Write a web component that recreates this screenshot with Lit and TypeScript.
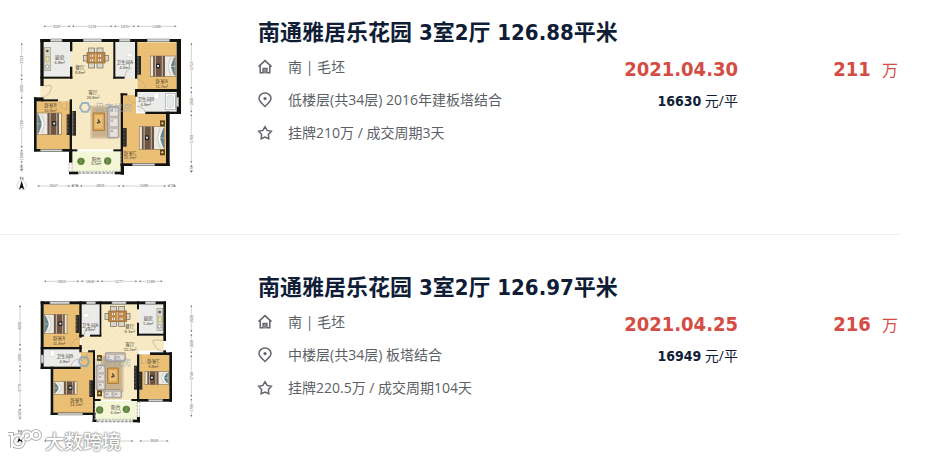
import { LitElement, html, svg, css } from "lit";
import { customElement, property } from "lit/decorators.js";

type Box = [number, number, number, number];
type Label = [number, number, string, string];
type Dim = [number, number, string];

interface Plan {
  living: Box[];
  wood: Box[];
  tile: Box[];
  balcony: Box;
  walls: Box[];
  windows: Box[];
  doors: string[];
  labels: Label[];
  top: Dim[];
  bottom: Dim[];
  left: Dim[];
  right: Dim[];
  rails: [number, number, number, number];
  furniture: unknown;
  compass: [number, number];
  mark: [number, number];
}

interface Deal {
  title: string;
  facing: string;
  floor: string;
  cycle: string;
  date: string;
  unit: string;
  total: string;
  plan: Plan;
}

const rect = (b: Box, fill: string) =>
  svg`<rect x=${b[0]} y=${b[1]} width=${b[2] - b[0]} height=${b[3] - b[1]} fill=${fill}></rect>`;

/* A double bed whose pillows are on the left; flip puts them on the right. */
const bed = (x: number, y: number, w: number, h: number, flip = false) => svg`
  <g transform=${flip ? `translate(${x + w} ${y}) scale(-1 1)` : `translate(${x} ${y})`}>
    <rect width=${w} height=${h} fill="#eee9df" stroke="#8d7a5c" stroke-width="2"></rect>
    <path d=${`M3 5l9 ${h / 2 - 7}H3zM3 ${h - 5}l9 ${7 - h / 2}H3z`} fill="#5f8493" stroke="#49707c" stroke-width="2"></path>
    <path d=${`M14 5l7 ${h / 2 - 5}l-7 ${h / 2 - 5}`} fill="#fff" stroke="#a9b4b4" stroke-width="2"></path>
    <rect x=${w * 0.42} width=${w * 0.48} height=${h} fill="#6d5444"></rect>
    <path d=${`M${w * 0.53} 0V${h}M${w * 0.81} 0V${h}`} stroke="#cbbba2" stroke-width="3"></path>
    <rect x=${w * 0.62} y=${h / 2 - 8} width="12" height="14" fill="#222"></rect>
    <rect x=${w * 0.62 + 3} y=${h / 2 - 4} width="6" height="6" fill="#d8dde0"></rect>
  </g>`;

const cabinet = (x: number, y: number, h: number) => svg`
  <rect x=${x} y=${y} width="11" height=${h} fill="#2c2c2a"></rect>
  <path d=${`M${x + 3} ${y + 4}V${y + h - 4}`} stroke="#77746a" stroke-width="2" stroke-dasharray="7 4"></path>`;

const dining = (x: number, y: number) => svg`
  <g transform=${`translate(${x} ${y})`}>
    <g fill="#d9d5cc" stroke="#706455" stroke-width="2">
      <rect x="17" y="0" width="18" height="16"></rect><rect x="42" y="0" width="18" height="16"></rect>
      <rect x="17" y="44" width="18" height="16"></rect><rect x="42" y="44" width="18" height="16"></rect>
      <rect x="1" y="22" width="14" height="17"></rect><rect x="62" y="22" width="14" height="17"></rect>
    </g>
    <rect x="12" y="14" width="54" height="31" fill="#bd8848" stroke="#8b5f2c" stroke-width="2"></rect>
    <path d="M22 23h9M45 23h9M22 37h9M45 37h9" stroke="#fff" stroke-width="6"></path>
    <path d="M26 20v6M49 20v6M26 34v6M49 34v6" stroke="#594027" stroke-width="2"></path>
    <path d="M38 17v25" stroke="#e4b374" stroke-width="4"></path>
  </g>`;

const plant = (x: number, y: number) => svg`
  <circle cx=${x} cy=${y} r="11" fill="#5b7f3d"></circle>
  <path d=${`M${x - 8} ${y - 5}l16 10M${x + 6} ${y - 8}l-12 16M${x} ${y - 10}v20`} stroke="#7da154" stroke-width="2"></path>`;

const stand = (x: number, y: number) => svg`
  <rect x=${x} y=${y} width="15" height="18" fill="#6a4b1d"></rect>
  <circle cx=${x + 7} cy=${y + 9} r="5" fill="#e7c977" stroke="#231a0c" stroke-width="2"></circle>`;

const cook = (x: number, y: number, h: number) => svg`
  <rect x=${x} y=${y} width="17" height=${h} fill="#dad7c6" stroke="#9b978a" stroke-width="2"></rect>
  <circle cx=${x + 8} cy=${y + 11} r="4" fill="#595649"></circle>
  <rect x=${x + 4} y=${y + h / 2 - 7} width="9" height="15" fill="#ebe397" stroke="#858068"></rect>
  <circle cx=${x + 8} cy=${y + h - 12} r="5" fill="#fff" stroke="#77746a" stroke-width="2"></circle>`;

const rug = (x: number, y: number, w: number, h: number) => svg`
  <rect x=${x} y=${y} width=${w} height=${h} fill="#d9c3a0"></rect>
  <rect x=${x + 6} y=${y + 6} width=${w - 12} height=${h - 12} fill="#c9b18c"></rect>`;

const coffeeTable = (x: number, y: number, w: number, h: number) => svg`
  <rect x=${x} y=${y} width=${w} height=${h} fill="#d9a451" stroke="#936a2f" stroke-width="2"></rect>
  <rect x=${x + 5} y=${y + 6} width=${w - 10} height=${h - 12} fill="#eabf77"></rect>
  <path d=${`M${x + w / 2 - 5} ${y + h / 2 + 4}l10-3M${x + w / 2 - 2} ${y + h / 2 - 7}l5 9`} stroke="#554a39" stroke-width="4"></path>`;

const sofa = (x: number, y: number, w: number, h: number, parts: number) => {
  const tall = h > w;
  const step = (tall ? h : w) / parts;
  return svg`
    <rect x=${x} y=${y} width=${w} height=${h} rx="3" fill="#c6bdb6" stroke="#8d827b" stroke-width="2"></rect>
    ${Array.from({ length: parts }, (_, i) => {
      const px = tall ? x + 6 : x + i * step + 3;
      const py = tall ? y + i * step + 3 : y + 6;
      return svg`<rect x=${px} y=${py} width=${tall ? w - 9 : step - 6} height=${tall ? step - 6 : h - 9} rx="2" fill="#e8e2dc" stroke="#968c85"></rect>
        <path d=${`M${px + 3} ${py + 4}l7 7m0-7l-7 7`} stroke="#9fa2b0" stroke-width="3"></path>`;
    })}`;
};

const planA: Plan = {
  living: [[131, 97, 364, 418], [362, 200, 410, 255], [121, 228, 135, 262]],
  wood: [[412, 97, 530, 240], [368, 255, 408, 462], [368, 310, 500, 462], [110, 274, 210, 418]],
  tile: [[131, 97, 212, 200], [345, 97, 405, 205], [412, 247, 530, 305]],
  balcony: [216, 424, 362, 484],
  walls: [
    [121, 87, 543, 96], [121, 87, 131, 228], [121, 200, 217, 206], [210, 87, 217, 124], [210, 170, 217, 206],
    [102, 262, 131, 274], [102, 262, 110, 424], [124, 268, 174, 274], [102, 417, 217, 425],
    [209, 268, 216, 430], [340, 87, 346, 206], [340, 200, 374, 206], [405, 87, 412, 206],
    [405, 237, 543, 246], [405, 240, 412, 260], [530, 87, 543, 312], [436, 305, 537, 312],
    [362, 250, 369, 467], [362, 250, 382, 256], [498, 305, 509, 468], [362, 460, 509, 468],
    [216, 418, 232, 424], [340, 418, 364, 424], [207, 424, 217, 458], [362, 460, 372, 494], [207, 485, 235, 493], [344, 485, 372, 493],
  ],
  windows: [[152, 87, 186, 95], [250, 87, 304, 95], [358, 87, 390, 95], [442, 87, 508, 95], [122, 418, 186, 424], [398, 461, 464, 467], [528, 262, 536, 290]],
  doors: ["M131 228q24-4 24 0q-2 24-24 34", "M178 272q2 24 22 28v-28", "M374 202q2-24 22-28", "M412 208q22 4 26 30", "M382 254q4 22 24 27", "M436 306q-4-14-26-18"],
  labels: [
    [179, 145, "厨房", "6.8m²"], [240, 175, "餐厅", "8.8m²"], [279, 249, "客厅", "26.8m²"], [374, 160, "卫生间A", "4.6m²"],
    [485, 216, "卧室A", "11.7m²"], [437, 270, "卫生间B", "4.8m²"], [151, 289, "卧室B", "10.8m²"], [390, 431, "卧室C", "15.1m²"], [289, 449, "阳台", "6.5m²"],
  ],
  top: [[128, 214, "3187"], [214, 340, "5218"], [340, 408, "1870"], [408, 532, "5088"]],
  bottom: [[110, 212, "3607"], [212, 238, "978"], [238, 364, "4809"], [364, 500, "5088"], [500, 530, "728"]],
  left: [[96, 202, "3753"], [202, 270, "1800"], [270, 416, "5768"], [416, 462, "1808"], [462, 484, "947"]],
  right: [[96, 240, "5753"], [240, 310, "1800"], [310, 462, "5768"], [462, 490, "978"]],
  rails: [235, 489, 344, 489],
  compass: [65, 526],
  mark: [255, 293],
  furniture: svg`
    ${cook(134, 112, 70)} ${dining(249, 114)} ${cabinet(412, 138, 56)} ${bed(452, 138, 74, 62, true)}
    ${bed(112, 309, 72, 65)} ${cabinet(200, 313, 62)} ${cabinet(217, 303, 74)} ${cabinet(369, 354, 56)}
    ${rug(271, 287, 70, 99)} ${coffeeTable(279, 309, 34, 52)} ${sofa(323, 290, 34, 94, 3)}
    ${bed(418, 350, 76, 68, true)} ${stand(480, 331)} ${stand(480, 418)}
    <rect x="496" y="251" width="30" height="48" fill="#fff" stroke="#9ea1a2" stroke-width="2"></rect>
    <rect x="501" y="256" width="20" height="38" rx="7" fill="#e5e8e9" stroke="#b4b8b9"></rect>
    <path d="M381 130h15v10h-15zM462 249h14v17h-14z" fill="#fff" stroke="#bbb"></path>
    ${plant(243, 454)} ${plant(323, 453)}`,
};

/* The last two spans below this plan carry no figure: the stamp lies over them. */
const planB: Plan = {
  living: [[304, 118, 416, 405], [242, 212, 492, 257], [282, 250, 416, 405]],
  wood: [[131, 118, 240, 248], [160, 310, 280, 444], [242, 260, 280, 320], [418, 268, 508, 403]],
  tile: [[245, 118, 299, 212], [131, 253, 240, 306], [417, 118, 490, 207]],
  balcony: [284, 408, 414, 466],
  walls: [
    [122, 109, 497, 118], [122, 109, 131, 312], [238, 109, 245, 218], [299, 109, 304, 214], [238, 209, 252, 215], [270, 209, 304, 215],
    [122, 246, 245, 253], [238, 240, 245, 262], [122, 305, 242, 312], [152, 305, 160, 450], [152, 443, 286, 450],
    [279, 256, 285, 450], [264, 256, 285, 262], [411, 109, 417, 133], [411, 173, 417, 211], [411, 206, 497, 212],
    [490, 109, 498, 228], [490, 256, 498, 270], [450, 262, 516, 270], [508, 262, 516, 410], [411, 268, 418, 410],
    [411, 402, 516, 410], [279, 402, 302, 408], [394, 402, 416, 408], [278, 443, 286, 471], [411, 456, 420, 472], [278, 464, 290, 471], [398, 464, 420, 472],
  ],
  windows: [[150, 109, 208, 117], [260, 109, 286, 117], [336, 109, 378, 117], [436, 109, 466, 117], [174, 444, 248, 450], [446, 403, 488, 409], [123, 270, 131, 294]],
  doors: ["M490 227q-28-4-32 0q4 24 32 34", "M240 218q-24 4-26 28", "M252 212q2-20 18-26", "M213 305q2-20 27-24", "M242 288q16-2 24-28", "M424 268v28q22-2 24-26"],
  labels: [
    [177, 223, "卧室A", "11.8m²"], [270, 182, "卫生间A", "4.8m²"], [194, 276, "卫生间B", "4.8m²"], [389, 187, "餐厅", "8.1m²"],
    [445, 162, "厨房", "5.4m²"], [390, 241, "客厅", "25.2m²"], [460, 291, "卧室C", "9.8m²"], [229, 407, "卧室B", "14.5m²"], [347, 429, "阳台", "6.0m²"],
  ],
  top: [[130, 240, "3853"], [240, 300, "1808"], [300, 414, "5277"], [414, 490, "2188"]],
  bottom: [[130, 285, ""], [285, 402, ""], [416, 508, "3608"]],
  left: [[118, 246, "4600"], [246, 310, "1800"], [310, 428, "3778"], [428, 466, "1347"]],
  right: [[118, 204, "2608"], [204, 268, "1608"], [268, 398, "3748"], [398, 458, "1788"]],
  rails: [290, 469, 398, 469],
  compass: [60, 520],
  mark: [252, 291],
  furniture: svg`
    ${bed(133, 148, 68, 58)} ${cabinet(227, 150, 54)} ${dining(314, 124)} ${cook(471, 130, 66)}
    ${bed(163, 350, 68, 38)} ${cabinet(268, 346, 50)} ${cabinet(402, 302, 72)} ${cabinet(416, 320, 54)}
    ${bed(435, 319, 70, 40, true)} ${rug(302, 272, 69, 110)} ${coffeeTable(323, 309, 32, 46)}
    ${sofa(288, 300, 28, 75, 3)} ${sofa(316, 263, 60, 26, 2)} ${sofa(312, 374, 53, 25, 2)} ${stand(291, 270)} ${stand(291, 376)}
    <path d="M249 145h18v12h-18zM151 256h13v18h-13z" fill="#fff" stroke="#bbb"></path>
    ${plant(299, 435)} ${plant(379, 433)}`,
};

const deals: Deal[] = [
  { title: "南通雅居乐花园 3室2厅 126.88平米", facing: "南 | 毛坯", floor: "低楼层(共34层) 2016年建板塔结合", cycle: "挂牌210万 / 成交周期3天", date: "2021.04.30", unit: "16630", total: "211", plan: planA },
  { title: "南通雅居乐花园 3室2厅 126.97平米", facing: "南 | 毛坯", floor: "中楼层(共34层) 板塔结合", cycle: "挂牌220.5万 / 成交周期104天", date: "2021.04.25", unit: "16949", total: "216", plan: planB },
];

@customElement("floor-plan")
class FloorPlan extends LitElement {
  @property({ attribute: false }) plan!: Plan;

  static styles = css`
    :host { display: block; }
    svg { display: block; width: 100%; height: auto; }
    .label { font: 14px "Noto Sans CJK SC", sans-serif; fill: #4a4334; text-anchor: middle; }
    .area { font: 12px "Liberation Sans", sans-serif; fill: #4a4334; text-anchor: middle; }
    .dim { font: 11px "Liberation Sans", sans-serif; fill: #666; text-anchor: middle; }
    .mark { font: 28px "Noto Sans CJK SC", sans-serif; fill: #93a7ba; opacity: 0.7; }
  `;

  private across(list: Dim[], y: number) {
    return list.map(([a, b, t]) => svg`
      <path d=${`M${a + 4} ${y}H${(a + b) / 2 - 13}M${(a + b) / 2 + 13} ${y}H${b - 4}`} stroke="#bbb" stroke-width="2"></path>
      <path d=${`M${a + 2} ${y}l6-3v6zM${b - 2} ${y}l-6-3v6z`} fill="#777"></path>
      ${t ? svg`<text class="dim" x=${(a + b) / 2} y=${y + 4}>${t}</text>` : ""}`);
  }

  private down(list: Dim[], x: number) {
    return list.map(([a, b, t]) => svg`
      <path d=${`M${x} ${a + 4}V${(a + b) / 2 - 13}M${x} ${(a + b) / 2 + 13}V${b - 4}`} stroke="#bbb" stroke-width="2"></path>
      <path d=${`M${x} ${a + 2}l-3 6h6zM${x} ${b - 2}l-3-6h6z`} fill="#777"></path>
      <text class="dim" transform=${`translate(${x + 4} ${(a + b) / 2}) rotate(-90)`}>${t}</text>`);
  }

  render() {
    const p = this.plan;
    const [cx, cy] = p.compass;
    const [mx, my] = p.mark;
    const first = p === planA;
    return html`<svg viewBox="0 0 630 582" role="img" aria-label="户型图">
      <defs>
        <pattern id="wood" width="20" height="12" patternUnits="userSpaceOnUse">
          <rect width="20" height="12" fill="#ecc176"></rect>
          <path d="M0 6H20M0 12H20" stroke="#e4b463" stroke-width="1"></path>
        </pattern>
        <pattern id="stone" width="18" height="18" patternUnits="userSpaceOnUse">
          <rect width="18" height="18" fill="#f7eac5"></rect>
          <path d="M0 9L9 0M9 18L18 9" stroke="#f4e3b8" stroke-width="2"></path>
        </pattern>
      </defs>
      ${p.living.map((b) => rect(b, "url(#stone)"))}
      ${p.wood.map((b) => rect(b, "url(#wood)"))}
      ${p.tile.map((b) => rect(b, "#ebebea"))}
      ${rect(p.balcony, "#f4f6d8")}
      ${p.furniture}
      ${p.walls.map((b) => rect(b, "#12120f"))}
      ${p.windows.map((b) => svg`${rect(b, "#d5d5d3")}<rect x=${b[0]} y=${b[1]} width=${b[2] - b[0]} height=${b[3] - b[1]} fill="none" stroke="#8d8d8a" stroke-width="2"></rect>`)}
      ${p.doors.map((d) => svg`<path d=${d} fill="none" stroke="#b3a98c" stroke-width="2"></path>`)}
      <path d=${`M${p.rails[0]} ${p.rails[1]}H${p.rails[2]}`} stroke="#999" stroke-width="5" stroke-dasharray="9 3"></path>
      <path d=${first ? "M207 460v26M216 460v26M216 484H362M364 424v38" : "M412 410v46M419 410v46M284 408v58M286 463H411"} stroke="#999" stroke-width="2" stroke-dasharray="7 3"></path>
      <path d=${`M${mx - 15} ${my - 1}l7-13h16l7 13-7 13h-16z`} fill="none" stroke="#7fa1c4" stroke-width="6" opacity="0.75"></path>
      <text class="mark" x=${mx + 30} y=${my + 11}>贝壳找房</text>
      ${p.labels.map(([x, y, n, a]) => svg`<text class="label" x=${x} y=${y + 3}>${n}</text><text class="area" x=${x} y=${y + 17}>${a}</text>`)}
      ${this.across(p.top, 49)} ${this.across(p.bottom, 528)}
      ${this.down(p.left, first ? 65 : 60)} ${this.down(p.right, 574)}
      <circle cx=${cx} cy=${cy} r="14" fill="none" stroke="#c6c6c6" stroke-width="2"></circle>
      <path d=${`M${cx} ${cy - 14}l8 27-8-6-8 6z`} fill="#111"></path>
      <path d=${`M${cx - 4} ${cy - 17}v-8l8 8v-8`} fill="none" stroke="#555" stroke-width="2"></path>
    </svg>`;
  }
}

const icon = (body: unknown) => html`<svg class="icon" viewBox="0 0 16 16" aria-hidden="true">${body}</svg>`;

const houseIcon = icon(svg`<path d="M1.5 7.6L8 1.6 14.5 7.6M3.2 6.4v7.4h2.9V9.4h3.8v4.4h2.9V6.4M8 10.6v3.8"></path>`);
const pinIcon = icon(svg`<path d="M8 14.4C5 11.6 2 9.3 2 6.5a6 5.5 0 0 1 12 0C14 9.3 11 11.6 8 14.4z"></path><circle class="dot" cx="8" cy="6.6" r="1.6"></circle>`);
const starIcon = icon(svg`<path d="M8 1.7l2.1 3.7 4.2.9-2.9 3.2.4 4.3L8 12.1l-3.8 1.7.4-4.3L1.7 6.3l4.2-.9z"></path>`);

@customElement("app-root")
class AppRoot extends LitElement {
  static styles = css`
    :host {
      display: block;
      position: relative;
      background: #fff;
      color: #5c5f66;
      font: 14px/20px "Open Sans", "Noto Sans CJK SC", sans-serif;
    }
    .list { list-style: none; margin: 0; padding: 0 34px 0 0; }
    .deal {
      display: grid;
      grid-template-columns: 210px minmax(0, 1fr) 120px 160px;
      grid-template-rows: auto 1fr;
      padding: 30px 0;
      border-bottom: 1px solid #eee;
    }
    .deal:first-child { padding-top: 10px; }
    .deal:last-child { padding-bottom: 0; border-bottom: 0; }
    .plan { grid-row: 1 / 3; }
    .title {
      grid-column: 2 / 5;
      margin: 7px 0 0 48px;
      font: bold 22px/32px "DejaVu Sans Condensed", "Noto Sans CJK SC", sans-serif;
    }
    .title a { color: #101d37; text-decoration: none; }
    .facts { list-style: none; margin: 8px 0 0 47px; padding: 0; display: grid; gap: 13px; align-content: start; }
    .fact { display: flex; align-items: center; gap: 15px; white-space: nowrap; }
    .icon { width: 16px; height: 16px; flex: none; fill: none; stroke: #62656b; stroke-width: 1.5; }
    .dot { fill: #62656b; stroke: none; }
    .when, .price { text-align: right; white-space: nowrap; margin-top: 8px; padding-right: 2px; }
    .date, .total {
      display: block;
      color: #d44d44;
      font: bold 20px/24px "DejaVu Sans Condensed", "Noto Sans CJK SC", sans-serif;
    }
    .wan { font-weight: normal; font-size: 16px; margin-left: 5px; }
    .unit { display: block; margin-top: 8px; color: #101d37; line-height: 24px; }
    .unit b { font-family: "DejaVu Sans Condensed", sans-serif; }
    .stamp {
      position: absolute;
      left: 8px;
      bottom: 5px;
      display: flex;
      align-items: center;
      gap: 3px;
      color: #fff;
      font: 500 19px/26px "Noto Sans CJK SC", sans-serif;
      text-shadow: 0 0 2px #888, 0 0 2px #888, 0 0 1px #999;
    }
    .logo { width: 34px; height: 26px; fill: none; overflow: visible; }
    .halo { stroke: #b4b4b4; stroke-width: 4; }
    .line { stroke: #fff; stroke-width: 2; }
  `;

  render() {
    const mark = "M0 6h4v14M13 8a6 6 0 1 0 3 5M12 11l3-3a4 4 0 1 1 2 3M24 7a4 4 0 1 1 8 0a4 4 0 1 1-8 0";
    return html`
      <ul class="list">
        ${deals.map((d) => html`
          <li class="deal">
            <floor-plan class="plan" .plan=${d.plan}></floor-plan>
            <h2 class="title"><a href="#">${d.title}</a></h2>
            <ul class="facts">
              <li class="fact">${houseIcon}<span>${d.facing}</span></li>
              <li class="fact">${pinIcon}<span>${d.floor}</span></li>
              <li class="fact">${starIcon}<span>${d.cycle}</span></li>
            </ul>
            <div class="when">
              <time class="date">${d.date}</time>
              <span class="unit"><b>${d.unit}</b> 元/平</span>
            </div>
            <div class="price"><span class="total">${d.total} <span class="wan">万</span></span></div>
          </li>`)}
      </ul>
      <div class="stamp">
        <svg class="logo" viewBox="0 0 34 26" aria-hidden="true">
          <path class="halo" d=${mark}></path><path class="line" d=${mark}></path>
        </svg>
        <span>大数跨境</span>
      </div>`;
  }
}
